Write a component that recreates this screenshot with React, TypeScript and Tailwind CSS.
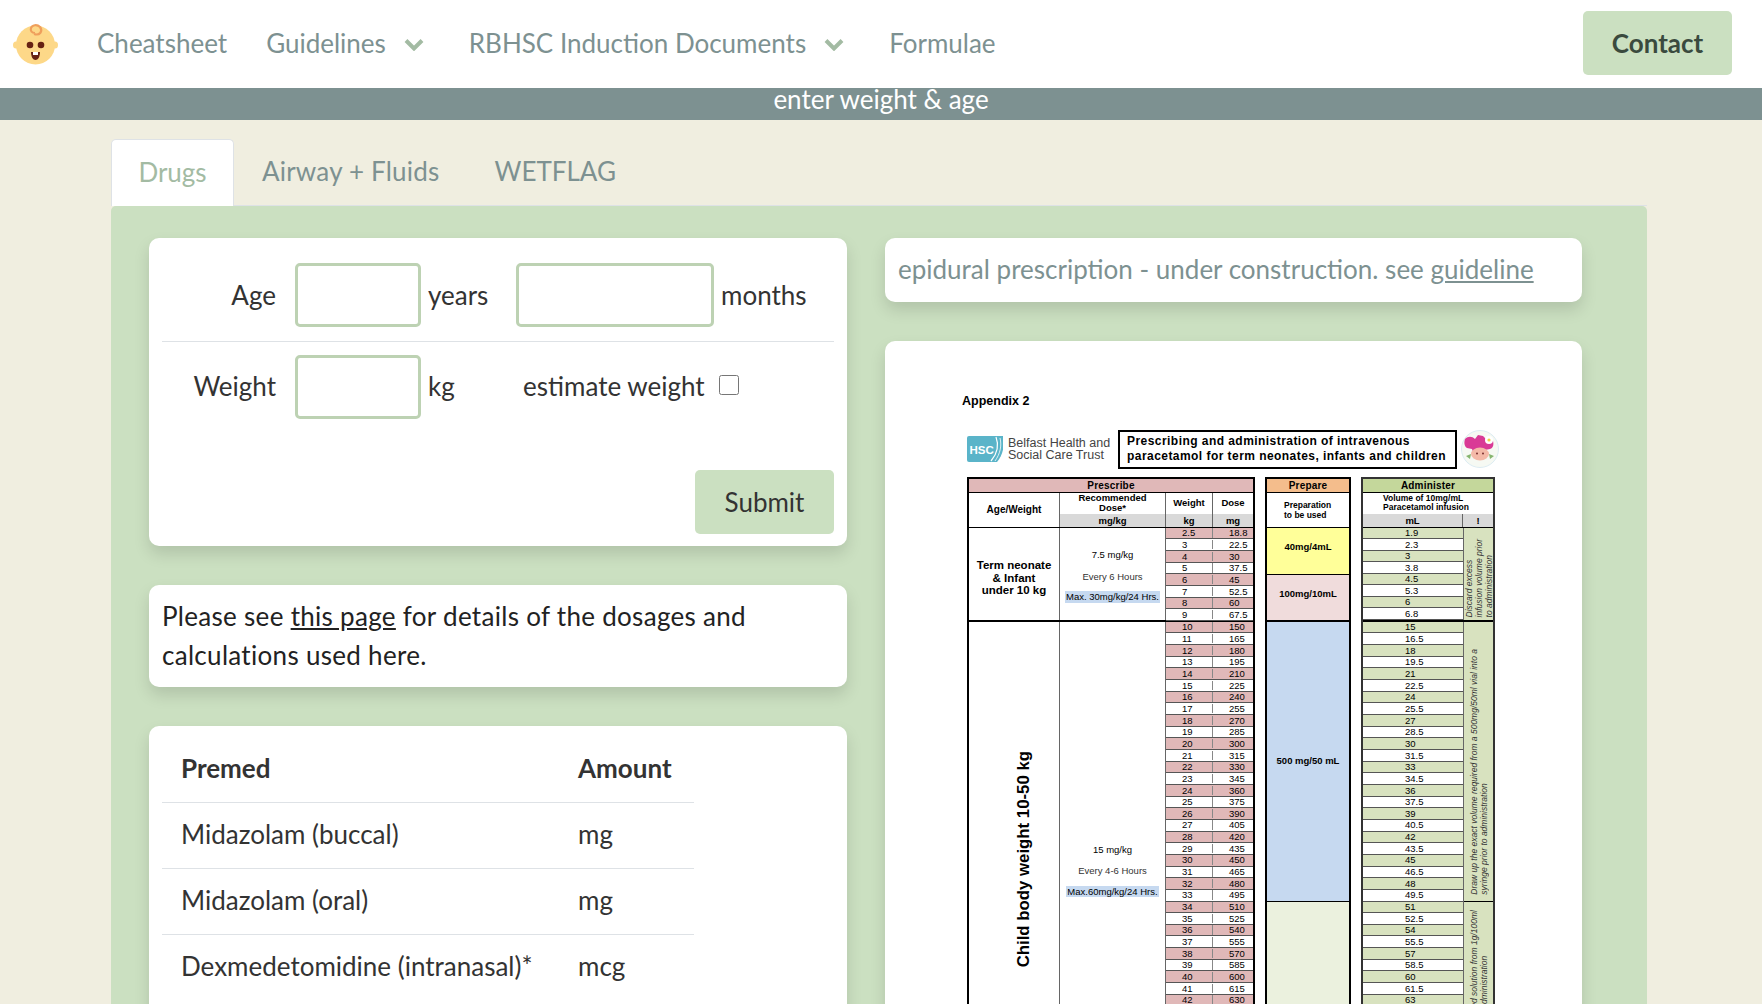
const navText = "text-[26px] text-[#7d9191]";
const cardShadow = "shadow-[0_8px_16px_rgba(0,0,0,0.13)]";

const BabyLogo = () => (
  <svg viewBox="0 0 45 43" className="h-[43px] w-[45px]">
    <circle cx="22.5" cy="23" r="19.5" fill="#fdd888" />
    <ellipse cx="3" cy="23" rx="3" ry="3.5" fill="#fdd888" />
    <ellipse cx="42" cy="23" rx="3" ry="3.5" fill="#fdd888" />
    <path d="M21 12c6 2 9-3 6-7-3-3-8-2-9 1s1 5 4 5" fill="none" stroke="#ef9f5c" strokeWidth="2.2" />
    <circle cx="17" cy="23" r="3.3" fill="#662113" />
    <circle cx="28" cy="23" r="3.3" fill="#662113" />
    <path d="M18 30h9c0 5-2 8-4.5 8S18 35 18 30z" fill="#662113" />
    <path d="M20 30h5v3h-5z" fill="#ffffff" />
  </svg>
);

const HscLogo = () => (
  <svg viewBox="0 0 36 26" className="h-[26px] w-[36px]">
    <path d="M2 0h34c2 9 0 19-6 26H2a2 2 0 0 1-2-2V2a2 2 0 0 1 2-2z" fill="#5ab4c9" />
    <path d="M29 1c3 8 1 17-5 24" fill="none" stroke="#ffffff" strokeWidth="1.2" />
    <path d="M33 2c2 8 0 16-5 23" fill="none" stroke="#ffffff" strokeWidth="0.8" />
    <text x="2.5" y="17.5" fill="#ffffff" fontSize="11.5" fontWeight="700" fontFamily="Liberation Sans">
      HSC
    </text>
  </svg>
);

const CowLogo = () => (
  <svg viewBox="0 0 38 38" className="h-[38px] w-[38px]">
    <circle cx="19" cy="19" r="18.5" fill="#f6f9f3" stroke="#dcecf2" />
    <path d="M4 9c3-3 7-3 10 0l3-4 5 1 4 4 6 1c1 4 0 7-3 8l-5 1-2 5H13l-2-6-5-1C3 16 3 12 4 9z" fill="#d93a96" />
    <ellipse cx="19" cy="24" rx="9" ry="6.5" fill="#f4b9a8" />
    <circle cx="16" cy="23.5" r="1" fill="#7a3030" />
    <circle cx="22" cy="23.5" r="1" fill="#7a3030" />
    <circle cx="28" cy="10" r="4" fill="#ffffff" />
    <circle cx="28" cy="10" r="1.6" fill="#eed04a" />
    <path d="M5 26l5-2-1 5zM33 26l-5-2 1 5z" fill="#86b56f" />
  </svg>
);

const NavChevron = () => (
  <svg viewBox="0 0 20 12" className="mt-[4px] ml-[18px] h-[12px] w-[20px]">
    <path d="M2 1.5l8 8 8-8" fill="none" stroke="#a3bba3" strokeWidth="4" />
  </svg>
);

const earlyWeights = [2.5, 3, 4, 5, 6, 7, 8, 9];
const childWeights = Array.from({ length: 33 }, (_, i) => i + 10);

const earlyDose: Record<number, string> = { 2.5: "18.8", 3: "22.5", 4: "30", 5: "37.5", 6: "45", 7: "52.5", 8: "60", 9: "67.5" };
const earlyMl: Record<number, string> = { 2.5: "1.9", 3: "2.3", 4: "3", 5: "3.8", 6: "4.5", 7: "5.3", 8: "6", 9: "6.8" };

const dose = (w: number) => (w < 10 ? earlyDose[w] : String(w * 15));
const ml = (w: number) => (w < 10 ? earlyMl[w] : String(w * 1.5));

const WeightRows = ({ weights }: { weights: number[] }) => (
  <div className="flex flex-col">
    {weights.map((w, i) => (
      <div
        key={w}
        className={`flex h-[11.67px] items-center border-b border-[#555] text-[9.5px] leading-none ${i % 2 === 0 ? "bg-[#e0b8b8]" : "bg-white"}`}
      >
        <div className="w-[47px] border-r border-[#888] pl-[16px]">{w}</div>
        <div className="flex-1 pl-[16px]">{dose(w)}</div>
      </div>
    ))}
  </div>
);

const MlRows = ({ weights }: { weights: number[] }) => (
  <div className="flex w-[100px] flex-col">
    {weights.map((w, i) => (
      <div
        key={w}
        className={`flex h-[11.67px] items-center border-b border-[#555] pl-[42px] text-[9.5px] leading-none ${i % 2 === 0 ? "bg-[#d8e2bf]" : "bg-white"}`}
      >
        {ml(w)}
      </div>
    ))}
  </div>
);

const DoseNote = ({ amount, every, max }: { amount: string; every: string; max: string }) => (
  <div className="flex flex-col items-center text-[9.5px] leading-none whitespace-nowrap">
    <div>{amount}</div>
    <div className="mt-[12px] text-[#333]">{every}</div>
    <div className="mt-[10px] bg-[#c6d9f0] px-[1px] py-[1px]">{max}</div>
  </div>
);

const SideNote = ({ lines, className }: { lines: string[]; className: string }) => (
  <div className={`flex justify-center overflow-hidden bg-[#d8e2bf] ${className}`}>
    <div className="shrink-0 rotate-180 text-left text-[8.5px] leading-[10px] whitespace-nowrap text-[#333] italic [writing-mode:vertical-rl]">
      {lines.map((l) => (
        <div key={l}>{l}</div>
      ))}
    </div>
  </div>
);

const ParacetamolChart = () => (
  <div className="font-['Liberation_Sans',sans-serif] text-black">
    <div className="pl-[77px] text-[12.5px] font-bold">Appendix 2</div>
    <div className="mt-[19px] ml-[82px] flex h-[39px] items-center">
      <HscLogo />
      <div className="ml-[5px] w-[110px] text-[12.5px] leading-[12.5px] text-[#444]">
        Belfast Health and Social Care Trust
      </div>
      <div className="flex h-[39px] w-[339px] flex-col justify-center border-2 border-black pl-[7px] text-[12px] leading-[15px] font-bold tracking-[0.45px]">
        <div>Prescribing and administration of intravenous</div>
        <div>paracetamol for term neonates, infants and children</div>
      </div>
      <div className="ml-[4px]">
        <CowLogo />
      </div>
    </div>

    <div className="mt-[8px] ml-[82px] flex items-start">
      {/* Prescribe */}
      <div className="w-[288px] border-x-2 border-t-2 border-black">
        <div className="flex h-[14px] items-center justify-center border-b border-black bg-[#e0b8b8] text-[10px] font-bold tracking-[0.2px]">Prescribe</div>
        <div className="flex h-[35px] border-b border-black text-[9.5px] font-bold">
          <div className="flex w-[91px] items-center justify-center border-r border-[#666] text-[10px]">Age/Weight</div>
          <div className="flex w-[106px] flex-col border-r border-[#666]">
            <div className="flex-1 text-center leading-[10.5px]">
              <div>Recommended</div>
              <div>Dose*</div>
            </div>
            <div className="h-[13px] bg-[#d9d9d9] text-center leading-[13px]">mg/kg</div>
          </div>
          <div className="flex w-[47px] flex-col border-r border-[#666]">
            <div className="flex flex-1 items-center justify-center">Weight</div>
            <div className="h-[13px] bg-[#d9d9d9] text-center leading-[13px]">kg</div>
          </div>
          <div className="flex flex-1 flex-col">
            <div className="flex flex-1 items-center justify-center">Dose</div>
            <div className="h-[13px] bg-[#d9d9d9] text-center leading-[13px]">mg</div>
          </div>
        </div>
        <div className="flex h-[94px] border-b-2 border-black">
          <div className="flex w-[91px] flex-col items-center justify-center border-r border-[#666] pt-[8px] text-center text-[11.5px] leading-[12.5px] font-bold">
            <div>Term neonate</div>
            <div>&amp; Infant</div>
            <div>under 10 kg</div>
          </div>
          <div className="flex w-[106px] items-center justify-center border-r border-[#666] pt-[5px]">
            <DoseNote amount="7.5 mg/kg" every="Every 6 Hours" max="Max. 30mg/kg/24 Hrs." />
          </div>
          <div className="flex-1">
            <WeightRows weights={earlyWeights} />
          </div>
        </div>
        <div className="flex">
          <div className="flex w-[91px] items-start justify-center border-r border-[#666] pt-[129px] pl-[20px]">
            <div className="rotate-180 text-[16.8px] leading-none whitespace-nowrap font-bold [writing-mode:vertical-rl]">Child body weight 10-50 kg</div>
          </div>
          <div className="flex w-[106px] justify-center border-r border-[#666] pt-[223px]">
            <div className="h-0">
              <DoseNote amount="15 mg/kg" every="Every 4-6 Hours" max="Max.60mg/kg/24 Hrs." />
            </div>
          </div>
          <div className="flex-1">
            <WeightRows weights={childWeights} />
          </div>
        </div>
      </div>

      {/* Prepare */}
      <div className="ml-[10px] w-[86px] border-x-2 border-t-2 border-black">
        <div className="flex h-[14px] items-center justify-center border-b border-black bg-[#f4bd8c] text-[10px] font-bold tracking-[0.2px]">Prepare</div>
        <div className="flex h-[35px] flex-col justify-center border-b border-black pl-[17px] text-[8.5px] leading-[10px] font-bold">
          <div>Preparation</div>
          <div>to be used</div>
        </div>
        <div className="flex h-[47px] items-center justify-center border-b border-black bg-[#ffff99] pb-[8px] text-[9.5px] font-bold">40mg/4mL</div>
        <div className="flex h-[47px] items-center justify-center border-b-2 border-black bg-[#f0dcdc] pb-[6px] text-[9.5px] font-bold">100mg/10mL</div>
        <div className="flex h-[280px] items-center justify-center border-b border-black bg-[#c6d9f0] text-[9.5px] font-bold">500 mg/50 mL</div>
        <div className="h-[150px] bg-[#ebf1de]" />
      </div>

      {/* Administer */}
      <div className="ml-[10px] w-[134px] border-x-2 border-t-2 border-[#333]">
        <div className="flex h-[14px] items-center justify-center border-b border-black bg-[#c4d79b] text-[10px] font-bold tracking-[0.2px]">Administer</div>
        <div className="flex h-[35px] flex-col border-b border-black">
          <div className="flex-1 pt-[1px] pl-[20px] text-[8.5px] leading-[9.5px] font-bold">
            <div>Volume of 10mg/mL</div>
            <div>Paracetamol infusion</div>
          </div>
          <div className="flex h-[13px] bg-[#d9d9d9] text-[9.5px] leading-[13px] font-bold">
            <div className="w-[100px] border-r border-[#666] text-center">mL</div>
            <div className="flex-1 text-center">!</div>
          </div>
        </div>
        <div className="flex h-[94px] border-b-2 border-black">
          <MlRows weights={earlyWeights} />
          <SideNote className="flex-1 items-end border-l border-[#666] pb-[2px]" lines={["Discard excess", "infusion volume prior", "to administration"]} />
        </div>
        <div className="flex">
          <MlRows weights={childWeights} />
          <div className="flex flex-1 flex-col border-l border-[#666]">
            <SideNote className="h-[280px] items-end border-b border-black pb-[6px]" lines={["Draw up the exact volume required from a 500mg/50ml vial into a", "syringe prior to administration"]} />
            <SideNote className="h-[150px] items-start pt-[8px]" lines={["Draw up the exact volume of undiluted solution from  1g/100ml", "vial and draw into a syringe prior to administration"]} />
          </div>
        </div>
      </div>
    </div>
  </div>
);

const Field = ({ className }: { className: string }) => (
  <input type="text" className={`h-[64px] rounded-[5px] border-[3px] border-[#bdd2b3] bg-white ${className}`} />
);

const rows = [
  ["Midazolam (buccal)", "mg"],
  ["Midazolam (oral)", "mg"],
];

export default function App() {
  return (
    <div className="h-screen overflow-hidden bg-[#f0eee0] font-['Lato',sans-serif] text-[26px] text-[#333]">
      <nav className="flex h-[88px] items-center bg-white pr-[30px] pb-[2px] pl-[13px]">
        <BabyLogo />
        <a className={`ml-[39px] ${navText}`}>Cheatsheet</a>
        <a className={`ml-[39px] flex items-center ${navText}`}>
          Guidelines
          <NavChevron />
        </a>
        <a className={`ml-[45px] flex items-center ${navText}`}>
          RBHSC Induction Documents
          <NavChevron />
        </a>
        <a className={`ml-[45px] ${navText}`}>Formulae</a>
        <button className="ml-auto h-[64px] w-[149px] rounded-[5px] bg-[#cbe0c1] font-bold text-[#3a4a3e]">Contact</button>
      </nav>

      <div className="h-[32px] bg-[#7d9191] text-center leading-[22px] text-white">enter weight &amp; age</div>

      <main className="pt-[19px] pr-[115px] pl-[111px]">
        <div className="flex h-[67px] border-b border-[#dee2e6]">
          <div className="flex h-[67px] w-[123px] items-center justify-center rounded-t-[5px] border border-b-0 border-[#dee2e6] bg-white pb-[2px] text-[#a3bba3]">Drugs</div>
          <div className="ml-[28px] flex items-center pb-[2px] tracking-[0.2px] text-[#7d9191]">Airway + Fluids</div>
          <div className="ml-[55px] flex items-center pb-[2px] text-[#7d9191]">WETFLAG</div>
        </div>

        <div className="flex h-[900px] gap-[38px] rounded-t-[5px] bg-[#cbe0c1] px-[38px] pt-[32px]">
          <div className="flex w-[698px] shrink-0 flex-col gap-[39px]">
            <section className={`h-[308px] shrink-0 rounded-[10px] bg-white px-[13px] pt-[25px] ${cardShadow}`}>
              <div className="flex h-[64px] items-center">
                <span className="w-[114px] text-right">Age</span>
                <Field className="ml-[19px] w-[126px]" />
                <span className="ml-[7px] w-[69px]">years</span>
                <Field className="ml-[19px] w-[198px]" />
                <span className="ml-[7px]">months</span>
              </div>
              <div className="mt-[14px] flex items-center border-t border-[#dee2e6] pt-[13px]">
                <span className="w-[114px] pb-[2px] text-right">Weight</span>
                <Field className="ml-[19px] w-[126px]" />
                <span className="ml-[7px] w-[69px] pb-[2px]">kg</span>
                <span className="ml-[26px] pb-[2px]">estimate weight</span>
                <input type="checkbox" className="mb-[5px] ml-[14px] h-[20px] w-[20px]" />
              </div>
              <div className="mt-[51px] flex justify-end">
                <button className="h-[64px] w-[139px] rounded-[5px] bg-[#cbe0c1]">Submit</button>
              </div>
            </section>

            <section className={`h-[102px] shrink-0 rounded-[10px] bg-white px-[13px] pt-[12px] leading-[39px] tracking-[0.3px] text-[#222] ${cardShadow}`}>
              Please see <a className="underline">this page</a> for details of the dosages and calculations used here.
            </section>

            <section className={`h-[400px] shrink-0 rounded-[10px] bg-white px-[13px] pt-[10px] ${cardShadow}`}>
              <table className="w-[532px]">
                <thead>
                  <tr className="h-[66px] border-b border-[#dee2e6] font-bold">
                    <th className="w-[416px] pl-[19px] text-left">Premed</th>
                    <th className="text-left">Amount</th>
                  </tr>
                </thead>
                <tbody>
                  {rows.map(([drug, unit]) => (
                    <tr key={drug} className="h-[66px] border-b border-[#dee2e6]">
                      <td className="pb-[1px] pl-[19px]">{drug}</td>
                      <td className="pb-[1px]">{unit}</td>
                    </tr>
                  ))}
                  <tr className="h-[66px]">
                    <td className="pb-[1px] pl-[19px]">Dexmedetomidine (intranasal)*</td>
                    <td className="pb-[1px]">mcg</td>
                  </tr>
                </tbody>
              </table>
            </section>
          </div>

          <div className="flex w-[697px] shrink-0 flex-col gap-[39px]">
            <section className={`flex h-[64px] shrink-0 items-center rounded-[10px] bg-white px-[13px] pb-[2px] text-[#7d9191] ${cardShadow}`}>
              <span>
                epidural prescription - under construction. see <a className="underline">guideline</a>
              </span>
            </section>
            <section className={`h-[800px] shrink-0 rounded-[10px] bg-white pt-[51px] ${cardShadow}`}>
              <ParacetamolChart />
            </section>
          </div>
        </div>
      </main>
    </div>
  );
}
